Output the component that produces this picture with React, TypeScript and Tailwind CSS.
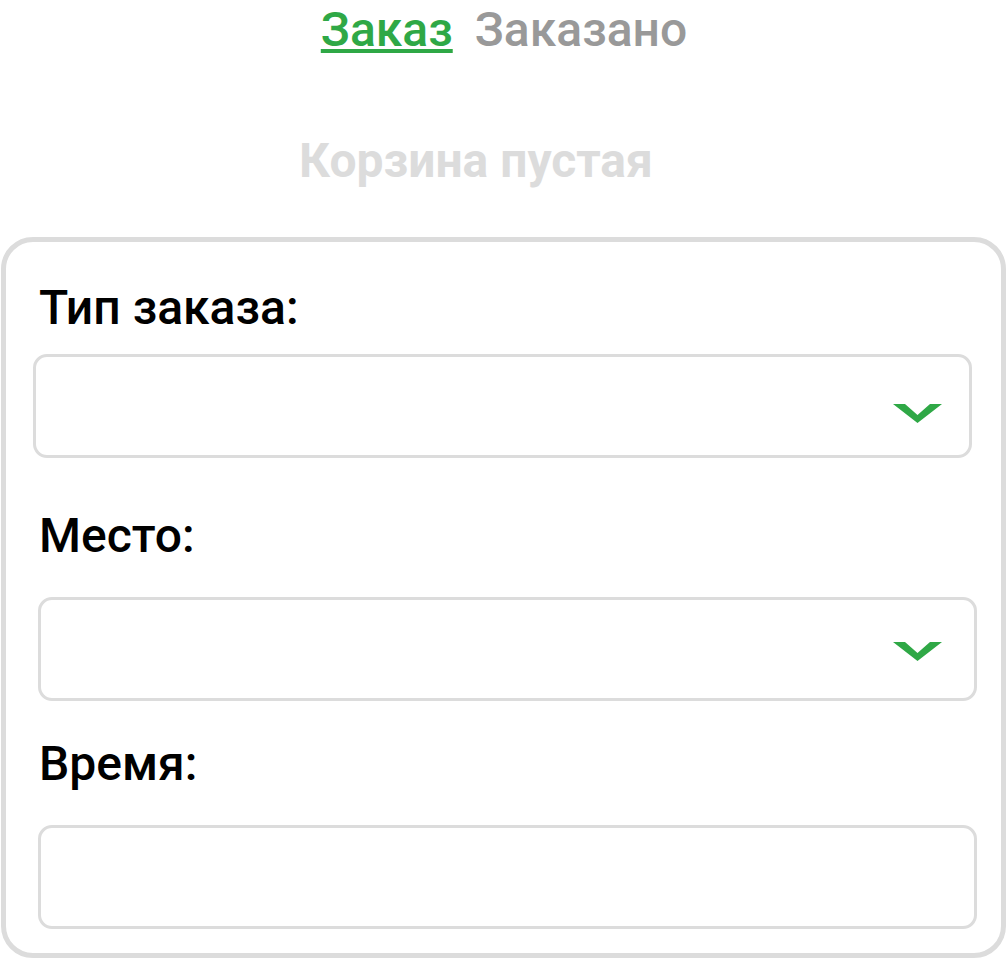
import React from 'react';

const Chevron: React.FC = () => (
  <svg width="49" height="19" viewBox="0 0 49 19" className="shrink-0">
    <polygon points="0,0 12,0 24.5,11 37,0 49,0 24.5,19" fill="#2fa846" />
  </svg>
);

const Label: React.FC<{ children: React.ReactNode; className?: string }> = ({ children, className = '' }) => (
  <div className={`text-[48px] leading-[56px] font-medium text-black ${className}`}>{children}</div>
);

const App: React.FC = () => {
  return (
    <div className="w-[1008px] h-[960px] bg-white overflow-hidden font-['Roboto',sans-serif]">
      <div className="flex justify-center gap-[22px] pt-[2px] text-[48px] leading-[56px] font-medium">
        <span className="text-[#2fa846] underline">Заказ</span>
        <span className="text-[#999999]">Заказано</span>
      </div>

      <div className="mt-[75px] pr-[56px] text-center text-[48px] leading-[56px] font-bold text-[#dcdcdc]">
        Корзина пустая
      </div>

      <div className="mt-[48px] ml-[1px] w-[1005px] h-[721px] border-[5px] border-[#dcdcdc] rounded-[32px] pt-[38px] pl-[33px] pb-[24px]">
        <Label>Тип заказа:</Label>
        <div className="mt-[18px] -ml-[6px] w-[939px] h-[104px] border-[3px] border-[#dcdcdc] rounded-[14px] flex justify-end items-start pt-[47px] pr-[27px]">
          <Chevron />
        </div>

        <Label className="mt-[50px]">Место:</Label>
        <div className="mt-[33px] -ml-[1px] w-[939px] h-[104px] border-[3px] border-[#dcdcdc] rounded-[14px] flex justify-end items-start pt-[42px] pr-[32px]">
          <Chevron />
        </div>

        <Label className="mt-[35px]">Время:</Label>
        <div className="mt-[33px] -ml-[1px] w-[939px] h-[104px] border-[3px] border-[#dcdcdc] rounded-[14px]" />
      </div>
    </div>
  );
};

export default App;
